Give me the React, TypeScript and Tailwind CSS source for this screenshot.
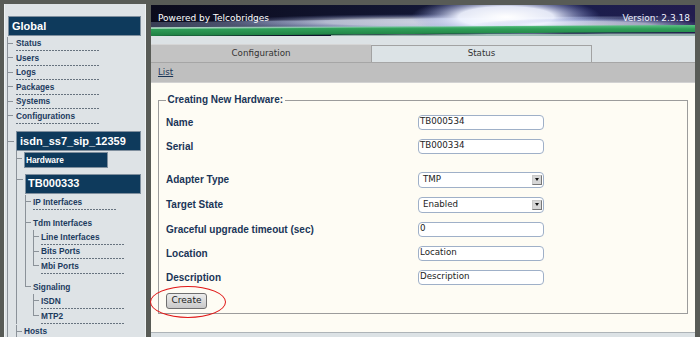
import React from 'react';

const SANS = "font-['Liberation_Sans',Arial,sans-serif]";
const DEJA = "font-['DejaVu_Sans',Verdana,sans-serif]";
const dots =
  'h-px w-[84px] bg-[repeating-linear-gradient(90deg,#67737f_0px,#67737f_2px,transparent_2px,transparent_3px)]';
const itemText = 'text-[8.3px] leading-[11px] font-bold text-[#1c3b5e]';

type LeafProps = { label: string; last?: boolean; root?: boolean };

function Leaf({ label, last = false, root = false }: LeafProps) {
  return (
    <div className={`relative h-[14.6px] ${root ? 'pl-[9px]' : 'pl-[8px]'}`}>
      <span className={`absolute left-0 top-0 w-px bg-[#8b9299] ${last ? 'h-[7px]' : 'h-full'}`} />
      <span className="absolute left-0 top-[6px] h-px w-[6px] bg-[#8b9299]" />
      <div className={`pt-[1.5px] ${itemText}`}>{label}</div>
      <div className={`mt-[1px] ${dots}`} />
    </div>
  );
}

function Folder({ label, last = false, children }: { label: string; last?: boolean; children: React.ReactNode }) {
  return (
    <div className="relative pl-[8px]">
      <span className={`absolute left-0 top-0 w-px bg-[#8b9299] ${last ? 'h-[13px]' : 'h-full'}`} />
      <span className="absolute left-0 top-[12.5px] h-px w-[6px] bg-[#8b9299]" />
      <div className={`pt-[8px] pb-[1.5px] ${itemText}`}>{label}</div>
      <div>{children}</div>
    </div>
  );
}

function Sidebar() {
  return (
    <aside className={`h-full w-[142px] shrink-0 border-x border-[#eef2f3] bg-[#dee3e6] pl-[2px] pr-[4px] pt-[12px] ${SANS}`}>
      <div className="ml-[1px] flex h-[20px] items-center border border-[#7f8f9e] bg-[#0e3a5c] pl-[3px] text-[11px] font-bold text-white">
        Global
      </div>
      <div className="pt-[0.5px]">
        <Leaf root label="Status" />
        <Leaf root label="Users" />
        <Leaf root label="Logs" />
        <Leaf root label="Packages" />
        <Leaf root label="Systems" />
        <Leaf root label="Configurations" />
        <div className="relative pl-[9px] pt-[7px]">
          <span className="absolute left-0 top-0 h-full w-px bg-[#8b9299]" />
          <span className="absolute left-0 top-[17px] h-px w-[7px] bg-[#8b9299]" />
          <div className="flex h-[20px] items-center border border-[#7f8f9e] bg-[#0e3a5c] pl-[3px] text-[11px] font-bold text-white">
            isdn_ss7_sip_12359
          </div>
          <div>
            <div className="relative pl-[8px] pt-[1px]">
              <span className="absolute left-0 top-0 h-full w-px bg-[#8b9299]" />
              <span className="absolute left-0 top-[7px] h-px w-[6px] bg-[#8b9299]" />
              <div className="flex h-[15.5px] w-[84px] items-center border border-[#7f8f9e] bg-[#0e3a5c] pl-[1px] text-[8.3px] font-bold text-white">
                Hardware
              </div>
            </div>
            <div className="relative pl-[9px] pt-[6px]">
              <span className="absolute left-0 top-0 h-full w-px bg-[#8b9299]" />
              <span className="absolute left-0 top-[11px] h-px w-[7px] bg-[#8b9299]" />
              <div className="flex h-[20px] items-center border border-[#7f8f9e] bg-[#0e3a5c] pl-[2px] text-[11px] font-bold text-white">
                TB000333
              </div>
              <div className="pt-[1.5px]">
                <Leaf label="IP Interfaces" />
                <Folder label="Tdm Interfaces">
                  <Leaf label="Line Interfaces" />
                  <Leaf label="Bits Ports" />
                  <Leaf label="Mbi Ports" last />
                </Folder>
                <Folder label="Signaling" last>
                  <Leaf label="ISDN" />
                  <Leaf label="MTP2" last />
                </Folder>
              </div>
            </div>
            <div className="pt-[1px]">
              <Leaf label="Hosts" />
            </div>
          </div>
        </div>
      </div>
    </aside>
  );
}

function Banner() {
  return (
    <div className={`relative h-[31px] overflow-hidden ${DEJA}`}>
      <svg className="absolute inset-0" width="544" height="31" viewBox="0 0 544 31">
        <defs>
          <linearGradient id="sky" x1="0" x2="1" y1="0" y2="0">
            <stop offset="0" stopColor="#0b0b1c" />
            <stop offset="0.45" stopColor="#121632" />
            <stop offset="0.8" stopColor="#1b1d4c" />
            <stop offset="1" stopColor="#221c4e" />
          </linearGradient>
          <radialGradient id="glow" cx="0.5" cy="0.5" r="0.5">
            <stop offset="0" stopColor="#ffffff" stopOpacity="1" />
            <stop offset="0.5" stopColor="#eef2ff" stopOpacity="0.95" />
            <stop offset="1" stopColor="#7f8fd8" stopOpacity="0" />
          </radialGradient>
          <linearGradient id="green" x1="0" x2="0" y1="0" y2="1">
            <stop offset="0" stopColor="#5cc485" />
            <stop offset="0.35" stopColor="#2f9e58" />
            <stop offset="1" stopColor="#1e7e42" />
          </linearGradient>
          <linearGradient id="hl" x1="0" x2="1" y1="0" y2="0">
            <stop offset="0" stopColor="#c8f0dc" stopOpacity="0.9" />
            <stop offset="0.5" stopColor="#a0d8c0" stopOpacity="0.5" />
            <stop offset="1" stopColor="#a0d8c0" stopOpacity="0" />
          </linearGradient>
          <linearGradient id="haze" x1="0" x2="1" y1="0" y2="0">
            <stop offset="0" stopColor="#8c9cc0" stopOpacity="0.35" />
            <stop offset="0.6" stopColor="#c0cff0" stopOpacity="0.75" />
            <stop offset="1" stopColor="#c0cff0" stopOpacity="0" />
          </linearGradient>
        </defs>
        <rect width="544" height="31" fill="url(#sky)" />
        <path d="M0 17 C150 16 300 12 544 11 L544 22 L0 24 Z" fill="url(#haze)" />
        <ellipse cx="280" cy="17" rx="210" ry="8" fill="url(#glow)" opacity="0.6" />
        <ellipse cx="355" cy="12" rx="95" ry="21" fill="url(#glow)" />
        <ellipse cx="440" cy="20" rx="120" ry="7" fill="url(#glow)" opacity="0.6" />
        <path d="M0 23 C150 22.5 350 21 544 20 L544 27 C350 28 150 30 0 31 Z" fill="url(#green)" />
        <path d="M0 23 C150 22 300 21.5 420 21" stroke="url(#hl)" strokeWidth="1.5" fill="none" />
        <path d="M180 30 C330 29 450 28.5 544 28.5 L544 31 L180 31 Z" fill="#b8d8c8" opacity="0.8" />
      </svg>
      <span className="absolute left-[7px] top-[7px] text-[9px] leading-[12px] text-white">Powered by Telcobridges</span>
      <span className="absolute right-[5px] top-[7px] text-[9px] leading-[12px] text-[#f0f2ff]">Version: 2.3.18</span>
    </div>
  );
}

function TextInput({ value }: { value: string }) {
  return (
    <div className={`flex h-[15px] w-[126px] items-center rounded-[4px] border border-[#9fb0c8] bg-white pl-[1px] text-[8.7px] text-[#222] ${DEJA}`}>
      {value}
    </div>
  );
}

function SelectBox({ value }: { value: string }) {
  return (
    <div className={`relative flex h-[16px] w-[126px] items-center rounded-[4px] border border-[#9fb0c8] bg-white pl-[4px] text-[8.7px] text-[#222] ${DEJA}`}>
      {value}
      <span className="absolute right-[1px] top-[2px] flex h-[10px] w-[10px] items-center justify-center border border-[#c8c8c8] border-b-[#777] border-r-[#777] bg-[#d6d6d6]">
        <svg width="4" height="3" viewBox="0 0 4 3">
          <path d="M0 0 L4 0 L2 3 Z" fill="#111" />
        </svg>
      </span>
    </div>
  );
}

function Row({ label, tall = false, children }: { label: string; tall?: boolean; children: React.ReactNode }) {
  return (
    <div className={`flex items-center ${tall ? 'h-[25px]' : 'h-[24px]'}`}>
      <div className="w-[252px] text-[10px] font-bold text-[#1a3558]">{label}</div>
      {children}
    </div>
  );
}

function Main() {
  return (
    <main className="ml-[5px] mt-[1px] flex h-[332px] w-[544px] shrink-0 flex-col bg-[#dce2e5]">
      <Banner />
      <div className="h-[8px] bg-[#dce2e5]" />
      <div className={`flex h-[18px] items-end text-[8.7px] text-[#333] ${DEJA}`}>
        <div className="flex h-[18px] w-[220px] items-center justify-center border-t border-[#d6d6d6] bg-[#c3c3c3]">
          Configuration
        </div>
        <div className="flex h-[17px] w-[221px] items-center justify-center border border-b-0 border-[#a2a2a2] bg-[#dce3e6]">
          Status
        </div>
      </div>
      <div className={`flex h-[20px] items-center border-t border-[#a6a6a6] bg-[#bfbfbf] pl-[7px] text-[8.7px] text-[#1a3558] ${DEJA}`}>
        <span className="underline">List</span>
      </div>
      <div className={`h-[250px] border-t border-[#d2d2d2] bg-[#fefcf4] px-[7px] pt-[11px] ${SANS}`}>
        <fieldset className="border border-[#9c9c9c] px-[7px] pb-[4.5px] pt-[4px]">
          <legend className="px-[1.5px] text-[10px] leading-[12px] font-bold text-[#1a3558]">Creating New Hardware:</legend>
          <Row label="Name">
            <TextInput value="TB000534" />
          </Row>
          <Row label="Serial">
            <TextInput value="TB000334" />
          </Row>
          <div className="h-[9px]" />
          <Row label="Adapter Type" tall>
            <SelectBox value="TMP" />
          </Row>
          <Row label="Target State" tall>
            <SelectBox value="Enabled" />
          </Row>
          <Row label="Graceful upgrade timeout (sec)">
            <TextInput value="0" />
          </Row>
          <Row label="Location">
            <TextInput value="Location" />
          </Row>
          <Row label="Description">
            <TextInput value="Description" />
          </Row>
          <div className="relative mt-[3.5px] h-[16px] w-[41px]">
            <button className={`flex h-[16px] w-[41px] items-center justify-center rounded-[3px] border border-[#6f6f6f] bg-[linear-gradient(#ececec,#c9c9c9)] text-[9px] text-[#222] ${DEJA}`}>
              Create
            </button>
            <div className="pointer-events-none absolute left-[-16px] top-[-7px] h-[32px] w-[76px] rounded-[50%] border border-[#e01818]" />
          </div>
        </fieldset>
      </div>
      <div className="flex-1 border-t border-[#aeb4b8] bg-[#dce2e5]" />
    </main>
  );
}

export default function App() {
  return (
    <div className="flex h-[337px] w-[700px] overflow-hidden bg-[#585b56] pl-[4px] pt-[4px]">
      <Sidebar />
      <Main />
    </div>
  );
}
